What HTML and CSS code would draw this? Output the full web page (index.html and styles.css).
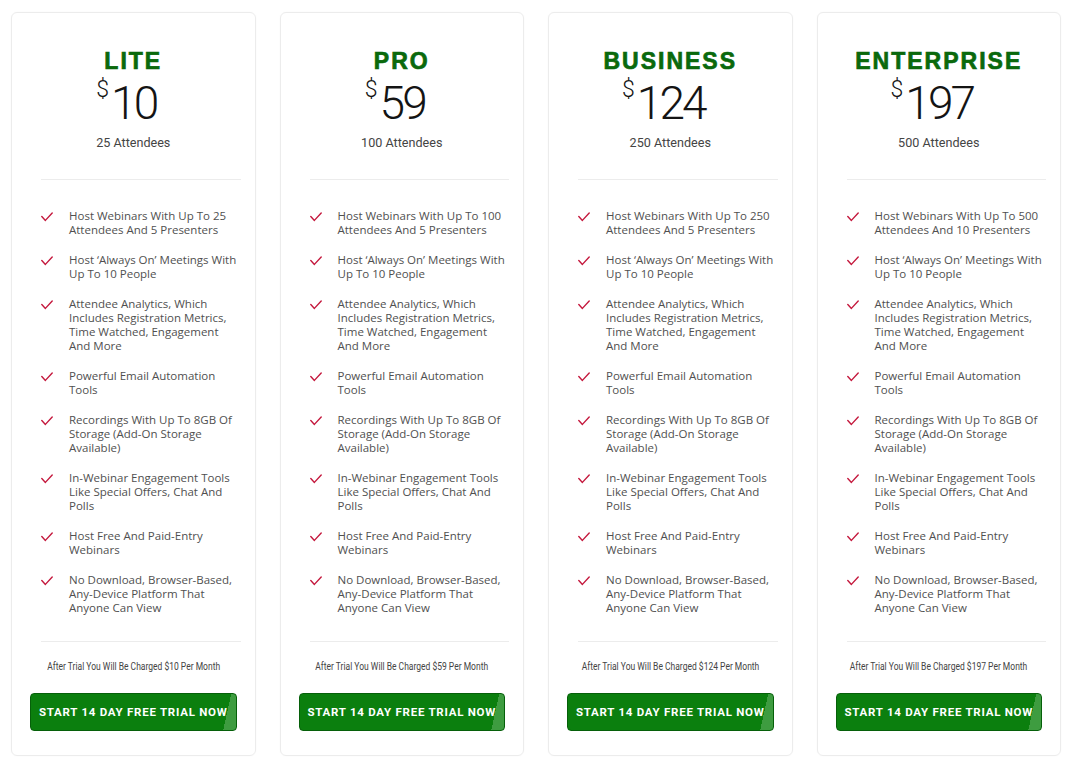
FILE: index.html
```html
<!DOCTYPE html>
<html lang="en">
<head>
<meta charset="utf-8">
<title>Pricing</title>
<link rel="stylesheet" href="styles.css">
</head>
<body>
<svg width="0" height="0" class="defs" aria-hidden="true">
  <symbol id="chk" viewBox="0 0 12 10"><path d="M0.8 4.6 L4.4 8.4 L11.2 1" fill="none" stroke="currentColor" stroke-width="1.4" stroke-linecap="round" stroke-linejoin="round"/></symbol>
</svg>
<main class="plans">
  <section class="card">
    <header class="head">
      <h2 class="name">LITE</h2>
      <div class="price"><span class="cur">$</span><span class="amt">10</span></div>
      <p class="att">25 Attendees</p>
    </header>
    <ul class="feats">
      <li><svg class="ic"><use href="#chk"/></svg><span>Host Webinars With Up To 25 Attendees And 5 Presenters</span></li>
      <li><svg class="ic"><use href="#chk"/></svg><span>Host ‘Always On’ Meetings With Up To 10 People</span></li>
      <li><svg class="ic"><use href="#chk"/></svg><span>Attendee Analytics, Which Includes Registration Metrics, Time Watched, Engagement And More</span></li>
      <li><svg class="ic"><use href="#chk"/></svg><span>Powerful Email Automation Tools</span></li>
      <li><svg class="ic"><use href="#chk"/></svg><span>Recordings With Up To 8GB Of Storage (Add-On Storage Available)</span></li>
      <li><svg class="ic"><use href="#chk"/></svg><span>In-Webinar Engagement Tools Like Special Offers, Chat And Polls</span></li>
      <li><svg class="ic"><use href="#chk"/></svg><span>Host Free And Paid-Entry Webinars</span></li>
      <li><svg class="ic"><use href="#chk"/></svg><span>No Download, Browser-Based, Any-Device Platform That Anyone Can View</span></li>
    </ul>
    <footer class="foot">
      <p class="note"><span>After Trial You Will Be Charged $10 Per Month</span></p>
      <a class="btn" href="#">START 14 DAY FREE TRIAL NOW</a>
    </footer>
  </section>
  <section class="card">
    <header class="head">
      <h2 class="name">PRO</h2>
      <div class="price"><span class="cur">$</span><span class="amt">59</span></div>
      <p class="att">100 Attendees</p>
    </header>
    <ul class="feats">
      <li><svg class="ic"><use href="#chk"/></svg><span>Host Webinars With Up To 100 Attendees And 5 Presenters</span></li>
      <li><svg class="ic"><use href="#chk"/></svg><span>Host ‘Always On’ Meetings With Up To 10 People</span></li>
      <li><svg class="ic"><use href="#chk"/></svg><span>Attendee Analytics, Which Includes Registration Metrics, Time Watched, Engagement And More</span></li>
      <li><svg class="ic"><use href="#chk"/></svg><span>Powerful Email Automation Tools</span></li>
      <li><svg class="ic"><use href="#chk"/></svg><span>Recordings With Up To 8GB Of Storage (Add-On Storage Available)</span></li>
      <li><svg class="ic"><use href="#chk"/></svg><span>In-Webinar Engagement Tools Like Special Offers, Chat And Polls</span></li>
      <li><svg class="ic"><use href="#chk"/></svg><span>Host Free And Paid-Entry Webinars</span></li>
      <li><svg class="ic"><use href="#chk"/></svg><span>No Download, Browser-Based, Any-Device Platform That Anyone Can View</span></li>
    </ul>
    <footer class="foot">
      <p class="note"><span>After Trial You Will Be Charged $59 Per Month</span></p>
      <a class="btn" href="#">START 14 DAY FREE TRIAL NOW</a>
    </footer>
  </section>
  <section class="card">
    <header class="head">
      <h2 class="name">BUSINESS</h2>
      <div class="price"><span class="cur">$</span><span class="amt">124</span></div>
      <p class="att">250 Attendees</p>
    </header>
    <ul class="feats">
      <li><svg class="ic"><use href="#chk"/></svg><span>Host Webinars With Up To 250 Attendees And 5 Presenters</span></li>
      <li><svg class="ic"><use href="#chk"/></svg><span>Host ‘Always On’ Meetings With Up To 10 People</span></li>
      <li><svg class="ic"><use href="#chk"/></svg><span>Attendee Analytics, Which Includes Registration Metrics, Time Watched, Engagement And More</span></li>
      <li><svg class="ic"><use href="#chk"/></svg><span>Powerful Email Automation Tools</span></li>
      <li><svg class="ic"><use href="#chk"/></svg><span>Recordings With Up To 8GB Of Storage (Add-On Storage Available)</span></li>
      <li><svg class="ic"><use href="#chk"/></svg><span>In-Webinar Engagement Tools Like Special Offers, Chat And Polls</span></li>
      <li><svg class="ic"><use href="#chk"/></svg><span>Host Free And Paid-Entry Webinars</span></li>
      <li><svg class="ic"><use href="#chk"/></svg><span>No Download, Browser-Based, Any-Device Platform That Anyone Can View</span></li>
    </ul>
    <footer class="foot">
      <p class="note"><span>After Trial You Will Be Charged $124 Per Month</span></p>
      <a class="btn" href="#">START 14 DAY FREE TRIAL NOW</a>
    </footer>
  </section>
  <section class="card">
    <header class="head">
      <h2 class="name">ENTERPRISE</h2>
      <div class="price"><span class="cur">$</span><span class="amt">197</span></div>
      <p class="att">500 Attendees</p>
    </header>
    <ul class="feats">
      <li><svg class="ic"><use href="#chk"/></svg><span>Host Webinars With Up To 500 Attendees And 10 Presenters</span></li>
      <li><svg class="ic"><use href="#chk"/></svg><span>Host ‘Always On’ Meetings With Up To 10 People</span></li>
      <li><svg class="ic"><use href="#chk"/></svg><span>Attendee Analytics, Which Includes Registration Metrics, Time Watched, Engagement And More</span></li>
      <li><svg class="ic"><use href="#chk"/></svg><span>Powerful Email Automation Tools</span></li>
      <li><svg class="ic"><use href="#chk"/></svg><span>Recordings With Up To 8GB Of Storage (Add-On Storage Available)</span></li>
      <li><svg class="ic"><use href="#chk"/></svg><span>In-Webinar Engagement Tools Like Special Offers, Chat And Polls</span></li>
      <li><svg class="ic"><use href="#chk"/></svg><span>Host Free And Paid-Entry Webinars</span></li>
      <li><svg class="ic"><use href="#chk"/></svg><span>No Download, Browser-Based, Any-Device Platform That Anyone Can View</span></li>
    </ul>
    <footer class="foot">
      <p class="note"><span>After Trial You Will Be Charged $197 Per Month</span></p>
      <a class="btn" href="#">START 14 DAY FREE TRIAL NOW</a>
    </footer>
  </section>
</main>
</body>
</html>
```
FILE: styles.css
```css
* { box-sizing: border-box; }
html, body { margin: 0; padding: 0; background: #fff; }
body { font-family: "Open Sans", "Liberation Sans", sans-serif; }
.defs { position: absolute; width: 0; height: 0; overflow: hidden; }

.plans {
  display: grid;
  grid-template-columns: repeat(4, 1fr);
  column-gap: 24px;
  padding: 12px 9px 10px 11px;
  height: 766px;
}

.card {
  display: flex;
  flex-direction: column;
  border: 1px solid #ececec;
  border-radius: 6px;
  padding: 34px 14px 24px 14px;
  box-shadow: 0 0 2px rgba(0,0,0,0.03);
}

.head { text-align: center; }
.name {
  margin: 0;
  font-family: "Liberation Sans", Arial, sans-serif;
  font-weight: 700;
  font-size: 23px;
  line-height: 28px;
  letter-spacing: 2px;
  color: #0a690c;
  -webkit-text-stroke: 0.7px #0a690c;
}
.price {
  margin-top: 5px;
  height: 46px;
  display: flex;
  justify-content: center;
  padding-right: 14px;
  color: #141414;
  font-family: Roboto, "Liberation Sans", sans-serif;
  font-weight: 300;
}
.cur { font-size: 23px; line-height: 23px; margin-top: -2px; margin-right: 2px; }
.amt { font-size: 46px; line-height: 46px; letter-spacing: -3px; }
.att {
  margin: 9px 0 0;
  font-family: Roboto, "Liberation Sans", sans-serif;
  font-size: 12.6px;
  line-height: 16px;
  color: #444;
}

.feats {
  list-style: none;
  margin: 28px 0 0 15px;
  padding: 29px 0 26px;
  border-top: 1px solid #ececec;
  border-bottom: 1px solid #ececec;
  flex: 1;
  display: flex;
  flex-direction: column;
  gap: 16px;
}
.feats li {
  display: flex;
  align-items: flex-start;
  gap: 16px;
  font-size: 11.5px;
  line-height: 14px;
  color: #505050;
}
.feats li span { flex: 1; }
.ic {
  width: 12px; height: 10px;
  flex: 0 0 12px;
  margin-top: 3px;
  color: #c4173c;
}
.foot { text-align: center; }
.note {
  margin: 19px 0 0;
  font-family: Roboto, "Liberation Sans", sans-serif;
  font-size: 10px;
  line-height: 12px;
  color: #444;
  white-space: nowrap;
}
.note span {
  display: inline-block;
  transform: scaleX(0.85);
}
.btn {
  display: block;
  margin: 20px 4px 0 4px;
  height: 38px;
  line-height: 36px;
  border: 1px solid #06600a;
  border-radius: 4px;
  background: linear-gradient(102.5deg, #0b7f0e 0 94%, #3e9c40 94%);
  color: #fff;
  text-decoration: none;
  font-family: Roboto, "Liberation Sans", sans-serif;
  font-weight: 700;
  font-size: 11.5px;
  letter-spacing: 0.75px;
  text-align: center;
  white-space: nowrap;
}
```
